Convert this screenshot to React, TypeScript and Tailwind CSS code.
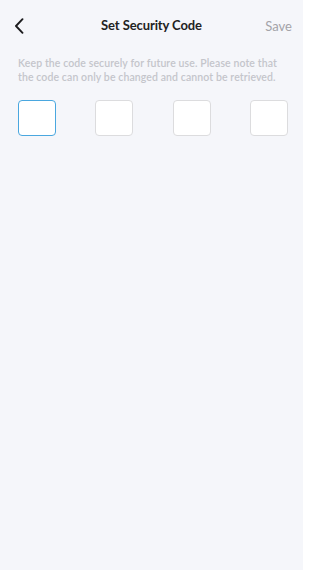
import React from "react";

export default function App() {
  const boxes = [0, 1, 2, 3];
  return (
    <div className="w-[303px] h-[570px] bg-[#f5f6fa] overflow-hidden" style={{ fontFamily: "Lato, 'Noto Sans', sans-serif" }}>
      <div className="relative h-[52px] flex items-center justify-center">
        <button className="absolute left-[12px] top-[17px] w-[14px] h-[18px] flex items-center justify-center">
          <svg width="10" height="16" viewBox="0 0 10 16" fill="none">
            <path d="M8.5 1.2 L2 8 L8.5 14.8" stroke="#1c1c1e" strokeWidth="1.9" strokeLinecap="round" strokeLinejoin="round" />
          </svg>
        </button>
        <div className="text-[13px] font-bold text-[#222222] tracking-[-0.1px]">Set Security Code</div>
        <div className="absolute right-[11px] top-[17px] text-[13px] text-[#a3a3a8]">Save</div>
      </div>
      <div className="px-[18px] pt-[5px] text-[10.5px] leading-[13.5px] font-semibold tracking-[0.1px] text-[#c4c5cb]">
        Keep the code securely for future use. Please note that the code can only be changed and cannot be retrieved.
      </div>
      <div className="flex justify-between pl-[18px] pr-[15px] pt-[16px]">
        {boxes.map((i) => (
          <div
            key={i}
            className={
              i === 0
                ? "w-[38px] h-[36px] bg-white rounded-[4px] border border-[#4aa7df]"
                : "w-[38px] h-[36px] bg-white rounded-[4px] border border-[#dcdcde]"
            }
          />
        ))}
      </div>
    </div>
  );
}
